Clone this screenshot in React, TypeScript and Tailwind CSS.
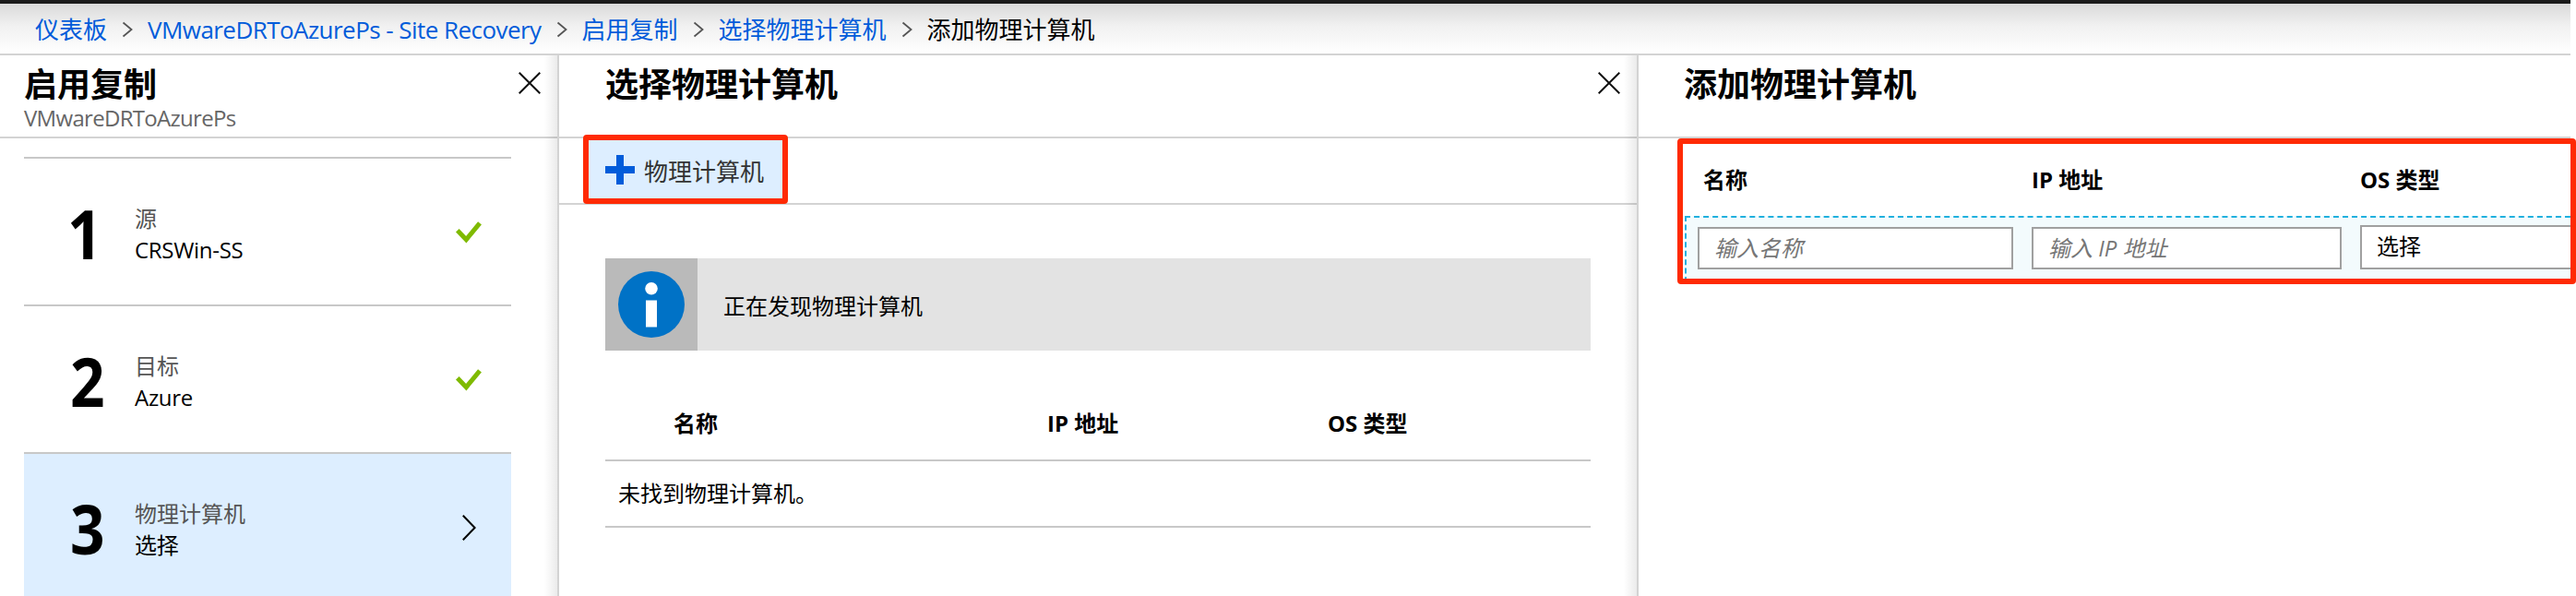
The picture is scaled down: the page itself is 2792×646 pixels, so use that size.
import type { ReactNode } from "react";

const crumbs = [
  { label: "仪表板", spacing: "" },
  { label: "VMwareDRToAzurePs - Site Recovery", spacing: "tracking-[-0.55px]" },
  { label: "启用复制", spacing: "" },
  { label: "选择物理计算机", spacing: "" },
];

const steps = [
  { num: "1", label: "源", value: "CRSWin-SS", done: true, shift: "-ml-[3px] mr-[3px]" },
  { num: "2", label: "目标", value: "Azure", done: true, shift: "" },
  { num: "3", label: "物理计算机", value: "选择", done: false, shift: "" },
];

function CrumbChevron() {
  return (
    <svg className="mx-4 h-[18px] w-3 shrink-0" viewBox="0 0 12 18" fill="none" stroke="#555" strokeWidth="1.8">
      <path d="M1.5 1.5 10.5 9 1.5 16.5" />
    </svg>
  );
}

function CloseIcon() {
  return (
    <svg className="h-6 w-6 shrink-0" viewBox="0 0 24 24" fill="none" stroke="#111" strokeWidth="2">
      <path d="M.7.7 23.3 23.3M23.3.7.7 23.3" />
    </svg>
  );
}

function CheckIcon() {
  return (
    <svg className="h-6 w-7" viewBox="0 0 28 24" fill="none" stroke="#7fba00" strokeWidth="5">
      <path d="M1.8 9.8 11.3 19.7 26 1.8" />
    </svg>
  );
}

function ChevronIcon() {
  return (
    <svg className="mr-[6px] h-7 w-[15px]" viewBox="0 0 15 28" fill="none" stroke="#000" strokeWidth="2">
      <path d="M.8.8 13.6 14 .8 27.2" />
    </svg>
  );
}

function PanelHeader({ title, subtitle, pad, closable }: { title: string; subtitle?: string; pad: string; closable?: boolean }) {
  return (
    <div className={`flex h-[90px] shrink-0 justify-between border-b-2 border-[#d3d3d3] pr-[18px] ${pad}`}>
      <div>
        <h2 className="mt-3 h-10 text-[36px] leading-[40px] font-bold">{title}</h2>
        {subtitle && <p className="h-8 text-[24px] leading-[32px] tracking-[-0.7px] text-[#666]">{subtitle}</p>}
      </div>
      {closable && (
        <div className="pt-[18px]">
          <CloseIcon />
        </div>
      )}
    </div>
  );
}

function Panel({ width, children }: { width: string; children: ReactNode }) {
  return (
    <section className={`relative flex shrink-0 flex-col border-r-2 border-[#d3d3d3] ${width}`}>
      {children}
      <div className="pointer-events-none absolute inset-y-0 right-0 w-3.5 bg-linear-to-r from-black/0 to-black/8" />
    </section>
  );
}

export default function App() {
  return (
    <div className="relative h-[646px] w-[2792px] overflow-hidden bg-white pr-1.5 font-['Open_Sans','Noto_Sans_CJK_SC',sans-serif] text-black">
      <div className="flex h-full flex-col">
        <div className="h-1 shrink-0 bg-[#1b1b1b]" />
        <nav className="flex h-14 shrink-0 items-center border-b-2 border-[#d3d3d3] bg-linear-to-b from-[#dadada] via-[#f1f1f1] via-45% to-white pt-0.5 pl-[38px] text-[26px] leading-[40px]">
          {crumbs.map((c) => (
            <span key={c.label} className="flex items-center whitespace-nowrap text-[#015cda]">
              <a className={c.spacing}>{c.label}</a>
              <CrumbChevron />
            </span>
          ))}
          <span>添加物理计算机</span>
        </nav>

        <div className="flex min-h-0 flex-1">
          <Panel width="w-[606px]">
            <PanelHeader title="启用复制" subtitle="VMwareDRToAzurePs" pad="pl-[26px]" closable />
            <div className="mt-5 ml-[26px] w-[528px]">
              {steps.map((s) => (
                <div
                  key={s.num}
                  className={`flex h-40 border-t-2 border-[#c8c8c8] pr-8 pl-[50px] ${s.done ? "" : "bg-[#ddeeff]"}`}
                >
                  <div className={`w-[70px] origin-left scale-x-[0.9] pt-[41px] text-[73px] leading-[80px] font-bold ${s.shift}`}>
                    {s.num}
                  </div>
                  <div className="flex-1 pt-[48px] text-[24px] leading-[34px]">
                    <div className="text-[#555]">{s.label}</div>
                    <div className="tracking-[-0.3px]">{s.value}</div>
                  </div>
                  <div className="flex h-[160px] items-center">{s.done ? <CheckIcon /> : <ChevronIcon />}</div>
                </div>
              ))}
            </div>
          </Panel>

          <Panel width="w-[1170px]">
            <PanelHeader title="选择物理计算机" pad="pl-[50px]" closable />
            <div className="flex h-[72px] shrink-0 border-b-2 border-[#d3d3d3] pl-[26px]">
              <button className="-mt-1 flex h-[75px] w-[222px] items-center rounded-[4px] border-[6px] border-[#ff2a04] bg-[#ddeeff] pl-[18px] text-[26px] leading-[40px] text-[#333]">
                <svg className="mr-2.5 h-8 w-8 shrink-0" viewBox="0 0 32 32" fill="#015cda">
                  <path d="M12 0h8v12h12v8H20v12h-8V20H0v-8h12z" />
                </svg>
                <span className="pt-1 whitespace-nowrap">物理计算机</span>
              </button>
            </div>
            <div className="mt-[58px] ml-[50px] flex h-[100px] w-[1068px] shrink-0 items-center bg-[#e3e3e3]">
              <div className="flex h-[100px] w-[100px] items-center justify-center bg-[#bababa]">
                <svg className="h-[72px] w-[72px]" viewBox="0 0 72 72">
                  <circle cx="36" cy="36" r="36" fill="#0072c6" />
                  <circle cx="36" cy="18.7" r="6.8" fill="#fff" />
                  <path d="M30 31.5h12v29H30z" fill="#fff" />
                </svg>
              </div>
              <p className="pt-[3px] pl-7 text-[24px] leading-[32px]">正在发现物理计算机</p>
            </div>
            <div className="ml-[50px] w-[1068px] text-[24px] leading-[32px]">
              <div className="flex h-[120px] border-b-2 border-[#c8c8c8] pt-[63px] pl-[74px] font-bold">
                <div className="w-[405px]">名称</div>
                <div className="w-[304px]">IP 地址</div>
                <div>OS 类型</div>
              </div>
              <div className="flex h-[72px] items-center border-b-2 border-[#c8c8c8] pl-3.5">未找到物理计算机。</div>
            </div>
          </Panel>

          <section className="flex min-w-0 flex-1 flex-col">
            <PanelHeader title="添加物理计算机" pad="pl-[49px]" />
            <div className="ml-[50px] flex h-[84px] shrink-0 pt-[29px] pl-5 text-[24px] leading-[32px] font-bold">
              <div className="w-[356px]">名称</div>
              <div className="w-[356px]">IP 地址</div>
              <div>OS 类型</div>
            </div>
            <div className="ml-[50px] flex h-[72px] shrink-0 items-start overflow-hidden border-t-2 border-l-2 border-dashed border-[#1fb0de] bg-[#f3fbfd] pt-2 pl-3 text-[24px] leading-[32px]">
              <div className="mt-0.5 mr-5 h-[46px] w-[342px] shrink-0 border-2 border-solid border-[#a0a0a0] bg-white pt-[5px] pl-4 text-[#767676] italic">
                输入名称
              </div>
              <div className="mt-0.5 mr-5 h-[46px] w-[336px] shrink-0 border-2 border-solid border-[#a0a0a0] bg-white pt-[5px] pl-4 text-[#767676] italic">
                输入 IP 地址
              </div>
              <div className="h-12 w-[342px] shrink-0 border-2 border-solid border-[#a0a0a0] bg-white pt-[5px] pl-4">选择</div>
            </div>
          </section>
        </div>
      </div>
      <div className="pointer-events-none absolute top-[150px] left-[1818px] h-[158px] w-[974px] rounded-[4px] border-[6px] border-[#ff2a04]" />
    </div>
  );
}
